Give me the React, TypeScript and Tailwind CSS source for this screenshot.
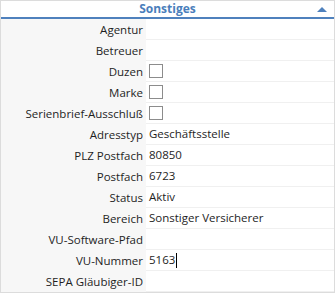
const rows: { label: string; value?: string; check?: boolean; cursor?: boolean }[] = [
  { label: 'Agentur' },
  { label: 'Betreuer' },
  { label: 'Duzen', check: true },
  { label: 'Marke', check: true },
  { label: 'Serienbrief-Ausschluß', check: true },
  { label: 'Adresstyp', value: 'Geschäftsstelle' },
  { label: 'PLZ Postfach', value: '80850' },
  { label: 'Postfach', value: '6723' },
  { label: 'Status', value: 'Aktiv' },
  { label: 'Bereich', value: 'Sonstiger Versicherer' },
  { label: 'VU-Software-Pfad' },
  { label: 'VU-Nummer', value: '5163', cursor: true },
  { label: 'SEPA Gläubiger-ID' },
];

export default function App() {
  return (
    <div className="w-[335px] h-[294px] bg-white" style={{ fontFamily: '"Open Sans", "Noto Sans", sans-serif' }}>
      <div className="h-[293px] border border-[#dcdcdc] flex flex-col overflow-hidden">
        {/* Kopfzeile */}
        <div className="h-[18px] relative flex items-center justify-center border-b-2 border-[#4f81bd] box-content">
          <span className="text-[12px] font-bold text-[#4a7ebb] leading-none">Sonstiges</span>
          <svg className="absolute right-[7px] top-[6px]" width="10" height="5" viewBox="0 0 10 5">
            <polygon points="0,5 5,0 10,5" fill="#4f81bd" />
          </svg>
        </div>
        {rows.map((r) => (
          <div key={r.label} className="flex h-[21px] shrink-0">
            <div className="w-[145px] bg-[#f7f7f7] flex items-center justify-end pr-[3px] text-[11.5px] text-[#1e1e1e]">
              {r.label}
            </div>
            <div className="flex-1 flex items-center pl-[3px] text-[11.5px] text-[#1e1e1e] border-b border-[#f0f0f0]">
              {r.check && <span className="w-[14px] h-[14px] border border-[#8c8c8c] bg-white"></span>}
              {r.value}
              {r.cursor && <span className="w-px h-[15px] bg-black ml-px"></span>}
            </div>
          </div>
        ))}
      </div>
    </div>
  );
}
